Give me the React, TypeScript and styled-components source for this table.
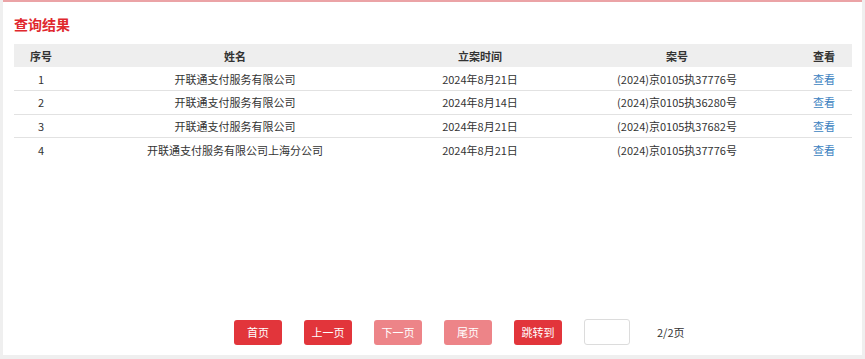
import * as React from 'react';
import styled, { createGlobalStyle } from 'styled-components';

const GlobalStyle = createGlobalStyle`
  html, body {
    margin: 0;
    padding: 0;
    background: #efefef;
    font-family: "Noto Sans CJK SC", "Noto Sans", sans-serif;
    color: #333;
  }
`;

const Page = styled.div`
  width: 865px;
  height: 359px;
  padding-left: 3px;
  box-sizing: border-box;
`;

const Panel = styled.div`
  width: 859px;
  height: 355px;
  background: #fff;
  border-top: 2px solid #eba3a6;
  box-sizing: border-box;
  display: flex;
  flex-direction: column;
  padding: 0 10px 10px 11px;
`;

const Title = styled.h2`
  margin: 0;
  padding-top: 12px;
  height: 42px;
  box-sizing: border-box;
  font-size: 14px;
  line-height: 20px;
  font-weight: bold;
  color: #e0282e;
`;

const Table = styled.table`
  width: 838px;
  border-collapse: collapse;
  table-layout: fixed;
  font-size: 11px;
`;

const Th = styled.th<{ $w: number }>`
  width: ${p => p.$w}px;
  height: 23px;
  padding: 0;
  background: #eeeeee;
  font-weight: bold;
  color: #333;
  text-align: center;
`;

const Tr = styled.tr`
  height: 23.5px;
  border-bottom: 1px solid #e2e2e2;
  &:last-child {
    border-bottom: none;
  }
`;

const Td = styled.td`
  padding: 0;
  text-align: center;
  color: #333;
  white-space: nowrap;
`;

const Link = styled.a`
  color: #3b7fbf;
  text-decoration: none;
  cursor: pointer;
`;

const Pager = styled.div`
  margin-top: auto;
  display: flex;
  align-items: center;
  gap: 22px;
  padding-left: 220px;
`;

const PageBtn = styled.button<{ $off?: boolean }>`
  width: 48px;
  height: 25px;
  border: none;
  border-radius: 3px;
  padding: 0;
  background: ${p => (p.$off ? '#ed8488' : '#e2353b')};
  color: #fff;
  font-family: inherit;
  font-size: 11px;
  cursor: ${p => (p.$off ? 'default' : 'pointer')};
`;

const JumpInput = styled.input`
  width: 46px;
  height: 26px;
  box-sizing: border-box;
  border: 1px solid #dcdcdc;
  border-radius: 3px;
  outline: none;
`;

const Total = styled.span`
  margin-left: 5px;
  font-size: 11px;
  color: #333;
`;

const cols = [
  { label: '序号', w: 54 },
  { label: '姓名', w: 334 },
  { label: '立案时间', w: 156 },
  { label: '案号', w: 238 },
  { label: '查看', w: 56 },
];

const rows = [
  { name: '开联通支付服务有限公司', date: '2024年8月21日', no: '(2024)京0105执37776号' },
  { name: '开联通支付服务有限公司', date: '2024年8月14日', no: '(2024)京0105执36280号' },
  { name: '开联通支付服务有限公司', date: '2024年8月21日', no: '(2024)京0105执37682号' },
  { name: '开联通支付服务有限公司上海分公司', date: '2024年8月21日', no: '(2024)京0105执37776号' },
];

const App = () => {
  const [jump, setJump] = React.useState('');

  return (
    <>
      <GlobalStyle />
      <Page>
        <Panel>
          <Title>查询结果</Title>
          <Table>
            <thead>
              <tr>
                {cols.map(c => (
                  <Th key={c.label} $w={c.w}>{c.label}</Th>
                ))}
              </tr>
            </thead>
            <tbody>
              {rows.map((r, i) => (
                <Tr key={i}>
                  <Td>{i + 1}</Td>
                  <Td>{r.name}</Td>
                  <Td>{r.date}</Td>
                  <Td>{r.no}</Td>
                  <Td><Link>查看</Link></Td>
                </Tr>
              ))}
            </tbody>
          </Table>
          <Pager>
            <PageBtn>首页</PageBtn>
            <PageBtn>上一页</PageBtn>
            <PageBtn $off>下一页</PageBtn>
            <PageBtn $off>尾页</PageBtn>
            <PageBtn>跳转到</PageBtn>
            <JumpInput value={jump} onChange={e => setJump(e.target.value)} />
            <Total>2/2页</Total>
          </Pager>
        </Panel>
      </Page>
    </>
  );
};

export default App;
